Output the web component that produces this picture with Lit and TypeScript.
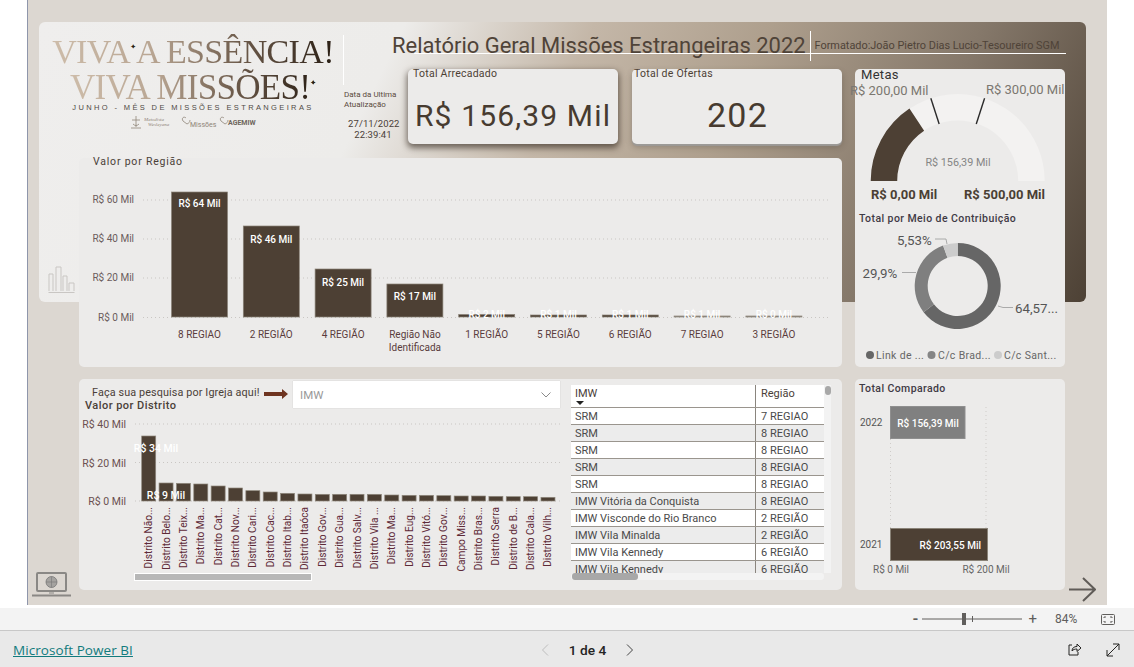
import {LitElement, html, svg, css} from 'lit';
import {customElement} from 'lit/decorators.js';

const DARK = '#4d4034';

const regions = [
  {name: ['8 REGIAO'], top: 192, value: 'R$ 64 Mil', labelY: 207},
  {name: ['2 REGIÃO'], top: 226, value: 'R$ 46 Mil', labelY: 243},
  {name: ['4 REGIÃO'], top: 269, value: 'R$ 25 Mil', labelY: 286},
  {name: ['Região Não', 'Identificada'], top: 284, value: 'R$ 17 Mil', labelY: 300},
  {name: ['1 REGIÃO'], top: 314.5, value: 'R$ 2 Mil', labelY: 318},
  {name: ['5 REGIÃO'], top: 315, value: 'R$ 1 Mil', labelY: 318},
  {name: ['6 REGIÃO'], top: 315, value: 'R$ 1 Mil', labelY: 318},
  {name: ['7 REGIAO'], top: 316, value: 'R$ 1 Mil', labelY: 318, light: true},
  {name: ['3 REGIÃO'], top: 316, value: 'R$ 0 Mil', labelY: 318, light: true},
];

const districts: [string, number][] = [
  ['Distrito Não...', 183], ['Distrito Belo...', 324], ['Distrito Teix...', 325], ['Distrito Ma...', 327],
  ['Distrito Cat...', 333], ['Distrito Nov...', 339], ['Distrito Cari...', 347], ['Distrito Cac...', 351],
  ['Distrito Itab...', 355], ['Distrito Itaóca', 357], ['Distrito Gov...', 358], ['Distrito Gua...', 358],
  ['Distrito Salv...', 358], ['Distrito Vila ...', 358], ['Distrito Ma...', 360], ['Distrito Eug...', 361],
  ['Distrito Vitó...', 361], ['Distrito Gov...', 362], ['Campo Miss...', 363], ['Distrito Bras...', 363],
  ['Distrito Serra', 364], ['Distrito de B...', 365], ['Distrito Cala...', 365], ['Distrito Vilh...', 367],
];

const churches = [
  ['SRM', '7 REGIAO'], ['SRM', '8 REGIAO'], ['SRM', '8 REGIAO'], ['SRM', '8 REGIAO'], ['SRM', '8 REGIAO'],
  ['IMW Vitória da Conquista', '8 REGIAO'], ['IMW Visconde do Rio Branco', '2 REGIÃO'],
  ['IMW Vila Minalda', '2 REGIÃO'], ['IMW Vila Kennedy', '6 REGIÃO'], ['IMW Vila Kennedy', '6 REGIÃO'],
];

// point on a half circle, fraction 0 is the left end and 1 the right end
function polar(cx: number, cy: number, r: number, f: number) {
  const a = Math.PI * (1 - f);
  return [cx + r * Math.cos(a), cy - r * Math.sin(a)];
}

function band(cx: number, cy: number, r0: number, r1: number, from: number, to: number) {
  const [ax, ay] = polar(cx, cy, r1, from);
  const [bx, by] = polar(cx, cy, r1, to);
  const [dx, dy] = polar(cx, cy, r0, to);
  const [ex, ey] = polar(cx, cy, r0, from);
  return `M${ax} ${ay}A${r1} ${r1} 0 0 1 ${bx} ${by}L${dx} ${dy}A${r0} ${r0} 0 0 0 ${ex} ${ey}Z`;
}

// donut slice, fractions run clockwise from the top
function slice(cx: number, cy: number, r0: number, r1: number, from: number, to: number) {
  const pt = (r: number, f: number) => {
    const a = 2 * Math.PI * f;
    return [cx + r * Math.sin(a), cy - r * Math.cos(a)];
  };
  const large = to - from > 0.5 ? 1 : 0;
  const [ax, ay] = pt(r1, from);
  const [bx, by] = pt(r1, to);
  const [dx, dy] = pt(r0, to);
  const [ex, ey] = pt(r0, from);
  return `M${ax} ${ay}A${r1} ${r1} 0 ${large} 1 ${bx} ${by}L${dx} ${dy}A${r0} ${r0} 0 ${large} 0 ${ex} ${ey}Z`;
}

@customElement('app-root')
export class AppRoot extends LitElement {
  static styles = css`
    :host {
      display: block;
      width: 1134px;
      height: 667px;
      overflow: hidden;
      background: #fff;
      font-family: Roboto, 'Liberation Sans', sans-serif;
      color: #4d4034;
    }
    .stage {
      display: flex;
      height: 605px;
    }
    .side {
      width: 27px;
      border-right: 1px solid #8f96ab;
      box-sizing: content-box;
    }
    .canvas {
      width: 1079px;
      height: 605px;
      background: #dcd7d1;
      display: grid;
      grid-template-columns: 11px 40px 313px 16px 210px 14px 210px 13px 210px 21px 21px;
      grid-template-rows: 22px 47px 75px 14px 144px 65px 12px 211px 15px;
    }
    .banner {
      grid-column: 2 / 11;
      grid-row: 2 / 6;
      border-radius: 6px;
      background: linear-gradient(116deg, #efeeed 0%, #edecea 31%, #c4b7a8 47%, #ae9f8d 62%, #85786a 80%, #4d4135 100%);
    }
    .brand {
      grid-column: 2 / 5;
      grid-row: 2 / 5;
      display: flex;
      padding: 9px 0 0 8px;
    }
    .logo {
      width: 296px;
      display: flex;
      flex-direction: column;
      align-items: center;
    }
    .headline {
      font-family: 'Liberation Serif', serif;
      font-size: 34px;
      line-height: 33px;
      white-space: nowrap;
      letter-spacing: -0.65px;
      margin-right: 4px;
      background: linear-gradient(90deg, #cdbca9 0%, #b9a693 35%, #6a5848 68%, #2a1f15 100%);
      -webkit-background-clip: text;
      background-clip: text;
      color: transparent;
    }
    .headline.second {
      font-size: 35px;
      line-height: 31px;
      letter-spacing: -0.7px;
      margin: 0 4px 0 0;
    }
    .star {
      font-family: 'DejaVu Sans', sans-serif;
      font-size: 7px;
      vertical-align: 14px;
      letter-spacing: 0;
      color: #2a1f15;
    }
    .sub {
      font-family: 'Liberation Sans', sans-serif;
      font-size: 7.5px;
      letter-spacing: 2.37px;
      white-space: nowrap;
      margin: 0 4px 0 0;
      color: #4f4a45;
    }
    .partners {
      margin: 3px 4px 0 0;
    }
    .divider {
      width: 1px;
      height: 50px;
      margin-top: 4px;
      background: #fff;
    }
    .updated {
      width: 60px;
      padding-top: 59px;
      font-size: 8px;
      line-height: 9.5px;
      color: #5a4a3c;
      white-space: nowrap;
    }
    .stamp {
      margin-top: 9px;
      text-align: center;
      width: 50px;
      margin-left: 4px;
      font-size: 9.5px;
      line-height: 11px;
      letter-spacing: 0.1px;
      color: #4a4038;
    }
    .title {
      grid-column: 4 / 11;
      grid-row: 2 / 3;
      display: grid;
    }
    .title > * {
      grid-area: 1 / 1;
    }
    .heading {
      display: flex;
      align-items: flex-start;
      padding-top: 15px;
      white-space: nowrap;
    }
    .heading h1 {
      margin: -6px 0 0;
      font-size: 21.96px;
      font-weight: 400;
      line-height: 30px;
      color: #4f4338;
    }
    .heading .bar {
      width: 1px;
      height: 30px;
      margin: -6px 4px 0 4px;
      background: #fff;
    }
    .heading small {
      font-size: 10.9px;
      line-height: 14px;
      margin-top: 2px;
      color: #4f4338;
    }
    .rule {
      height: 1px;
      background: #fff;
      margin: 31px 20px 0 22px;
    }
    .card {
      background: #ecebea;
      border-radius: 5px;
    }
    .kpi {
      display: flex;
      flex-direction: column;
      grid-row: 3 / 4;
      padding: 0 0 0 5px;
      box-sizing: border-box;
    }
    .kpi.total {
      grid-column: 5 / 6;
      box-shadow: 0 3px 6px 1px rgba(50, 40, 30, 0.65);
    }
    .kpi.offers {
      grid-column: 7 / 8;
      box-shadow: 0 2px 1px #9c9a97, 0 3px 6px rgba(60, 50, 40, 0.3);
      padding-left: 2px;
    }
    .kpi label {
      font-size: 10.5px;
      line-height: 13px;
      margin-top: -2px;
      letter-spacing: 0.25px;
    }
    .kpi strong {
      flex: 1;
      display: flex;
      align-items: center;
      justify-content: center;
      margin: 6px 5px 0 0;
      font-weight: 400;
      font-size: 30px;
      letter-spacing: 1.15px;
      color: #473b30;
      white-space: nowrap;
    }
    .kpi.offers strong {
      font-size: 34px;
      margin-left: 4px;
    }
    .metas {
      grid-column: 9 / 10;
      grid-row: 3 / 7;
    }
    .regiao {
      grid-column: 3 / 8;
      grid-row: 5 / 7;
    }
    .bars-icon {
      grid-column: 2 / 3;
      grid-row: 5 / 6;
      align-self: end;
      margin: 0 0 9px 9px;
    }
    .lower {
      grid-column: 3 / 8;
      grid-row: 8 / 9;
      display: grid;
      grid-template-columns: 492px 1fr;
    }
    .compare {
      grid-column: 9 / 10;
      grid-row: 8 / 9;
    }
    svg.chart {
      display: block;
      overflow: visible;
    }
    svg.chart text {
      font-family: Roboto, 'Liberation Sans', sans-serif;
    }
    .laptop {
      grid-column: 1 / 3;
      grid-row: 8 / 10;
      align-self: end;
      margin: 0 0 8px 3px;
    }
    .next {
      grid-column: 10 / 12;
      grid-row: 8 / 10;
      align-self: end;
      margin: 0 0 3px 4px;
    }
    .search {
      display: grid;
    }
    .search > * {
      grid-area: 1 / 1;
    }
    .filter {
      display: flex;
      align-items: flex-start;
      height: 27px;
      margin-top: 2px;
      padding-left: 13px;
    }
    .filter span {
      width: 172px;
      font-size: 10.8px;
      line-height: 24px;
      letter-spacing: 0.12px;
      color: #4a4038;
      white-space: nowrap;
    }
    .arrow {
      margin: 8px 5px 0 0;
    }
    .select {
      width: 267px;
      height: 27px;
      box-sizing: border-box;
      background: #fff;
      display: flex;
      align-items: center;
      justify-content: space-between;
      padding: 0 9px 0 7px;
      font-size: 11.5px;
      color: #999;
      box-shadow: 0 0 1px rgba(0, 0, 0, 0.2);
    }
    .tablewrap {
      display: grid;
      grid-template-columns: 253px 7px;
      grid-template-rows: 188px 7px;
      margin: 6px 0 0 0;
    }
    .table {
      height: 188px;
      overflow: hidden;
      background: #fff;
      font-size: 11px;
      color: #4a4a4a;
    }
    .row {
      display: grid;
      grid-template-columns: 184px 1px 1fr;
      height: 17px;
      line-height: 18px;
      box-sizing: border-box;
      border-bottom: 1px solid #9a958e;
      white-space: nowrap;
    }
    .row.head {
      height: 23px;
      line-height: 18px;
      color: #4a4038;
    }
    .row.odd {
      background: #ececec;
    }
    .row > div:first-child,
    .row > div:last-child {
      padding-left: 4px;
      overflow: hidden;
    }
    .row > div:last-child {
      padding-left: 5px;
    }
    .row > i {
      background: #8a857e;
    }
    .sort {
      display: block;
      width: 0;
      height: 0;
      margin: -2px 0 0 1px;
      border: 4px solid transparent;
      border-top: 4px solid #222;
      border-bottom: 0;
    }
    .vscroll {
      background: #f3f3f3;
    }
    .vscroll b {
      display: block;
      width: 6px;
      height: 9px;
      margin: 1px 0 0 1px;
      border-radius: 3px;
      background: #a8a8a8;
    }
    .hscroll {
      background: #f3f3f3;
      border-radius: 3px;
    }
    .hscroll b {
      display: block;
      width: 66px;
      height: 7px;
      margin-left: 1px;
      border-radius: 3px;
      background: #a8a8a8;
    }
    .zoombar {
      margin-top: 3px;
      height: 22px;
      background: #f3f3f3;
      border-bottom: 1px solid #c8c8c8;
      display: flex;
      align-items: center;
      justify-content: flex-end;
      font-size: 12px;
      color: #605e5c;
    }
    .minus {
      font-size: 15px;
      font-weight: 700;
      margin-right: 4px;
    }
    .plus {
      font-size: 15px;
      margin: 0 18px 0 5px;
    }
    .zoombar svg {
      display: block;
    }
    .pct {
      width: 24px;
      margin-right: 22px;
    }
    .fit {
      margin-right: 19px;
    }
    .footer {
      height: 34px;
      background: #e9e9e9;
      display: grid;
      grid-template-columns: 1fr auto 1fr;
      align-items: center;
      padding: 2px 14px 0 13px;
    }
    .footer a {
      font-family: 'Open Sans', sans-serif;
      font-size: 13.5px;
      line-height: 20px;
      color: #117b7d;
      text-decoration: underline;
      letter-spacing: 0.06px;
    }
    .pager {
      display: flex;
      align-items: center;
      gap: 20px;
      font-size: 13.7px;
      font-weight: 500;
      color: #252423;
      margin-left: 42px;
    }
    .actions {
      display: flex;
      justify-content: flex-end;
      gap: 24px;
    }
  `;

  private regionChart() {
    const grid = [[200, 'R$ 60 Mil'], [239, 'R$ 40 Mil'], [278, 'R$ 20 Mil'], [317.5, 'R$ 0 Mil']] as const;
    return html`<svg class="chart" width="763" height="209" viewBox="79 158 763 209">
      <text x="93" y="165" font-size="10.5" letter-spacing=".8" fill="#4a4038">Valor por Região</text>
      ${grid.map(([y, t]) => svg`
        <line x1="143" x2="830" y1=${y} y2=${y} stroke="#c9c6c3" stroke-dasharray="1 3"></line>
        <text x="134" y=${y + 3} text-anchor="end" font-size="10" fill="#6b5c5c">${t}</text>`)}
      ${regions.map((r, i) => {
        const x = 171.5 + i * 71.8;
        const fill = r.light ? '#8f8a83' : DARK;
        return svg`
          <rect x=${x} y=${r.top} width="56" height=${317 - r.top} fill=${fill} stroke="#8a8378" stroke-width=".7"></rect>
          <text x=${x + 28} y=${r.labelY} text-anchor="middle" font-size="10" font-weight="500" fill="#fff">${r.value}</text>
          ${r.name.map((n, k) => svg`
            <text x=${x + 28} y=${337.5 + k * 13} text-anchor="middle" font-size="10" fill="#5a3c3c">${n}</text>`)}`;
      })}
    </svg>`;
  }

  private districtChart() {
    const grid = [[424, 'R$ 40 Mil'], [462.5, 'R$ 20 Mil'], [501, 'R$ 0 Mil']] as const;
    return html`<svg class="chart" width="492" height="211" viewBox="79 379 492 211">
      <text x="85" y="409" font-size="11" font-weight="500" letter-spacing=".45" fill="#4a4038">Valor por Distrito</text>
      ${grid.map(([y, t]) => svg`
        <line x1="135" x2="561" y1=${y} y2=${y} stroke="#c9c6c3" stroke-dasharray="1 3"></line>
        <text x="126" y=${y + 4} text-anchor="end" font-size="10.5" fill="#6b5050">${t}</text>`)}
      ${districts.map(([name, z], i) => {
        const x = 141.7 + i * 17.36;
        const top = 375 + z / 3;
        const cx = x + 7;
        return svg`
          <rect x=${x} y=${top} width="14" height=${501 - top} fill=${DARK} stroke="#8f887d" stroke-width=".7"></rect>
          <text transform="rotate(-90 ${cx + 3.5} 507)" x=${cx + 3.5} y="507" text-anchor="end" font-size="10.1" fill="#5e2a38">${name}</text>`;
      })}
      <text x="156" y="452" text-anchor="middle" font-size="10.5" font-weight="500" fill="#fff">R$ 34 Mil</text>
      <text x="166" y="499" text-anchor="middle" font-size="10.5" font-weight="500" fill="#fff">R$ 9 Mil</text>
      <rect x="134.5" y="573.5" width="177" height="7" fill="#b7b7b7" stroke="#fff"></rect>
    </svg>`;
  }

  private metas() {
    const cx = 957.7, cy = 181;
    const tick = (f: number) => {
      const [x1, y1] = polar(cx, cy, 60, f);
      const [x2, y2] = polar(cx, cy, 87, f);
      return svg`<line x1=${x1} y1=${y1} x2=${x2} y2=${y2} stroke="#2b2b2b" stroke-width="1.4"></line>`;
    };
    const dc = 957.7, dy = 286;
    return html`<svg class="chart" width="210" height="298" viewBox="855 69 210 298">
      <text x="861" y="79" font-size="13" letter-spacing=".3" fill="#333">Metas</text>
      <path d=${band(cx, cy, 60.5, 87, 0, 1)} fill="#f3f2f1"></path>
      <path d=${band(cx, cy, 60.5, 87, 0, 0.3128)} fill=${DARK}></path>
      ${tick(0.4)}${tick(0.6)}
      <text x="850" y="95" font-size="13" fill="#7b7770">R$ 200,00 Mil</text>
      <text x="986" y="94" font-size="13" fill="#7b7770">R$ 300,00 Mil</text>
      <text x="958" y="166" text-anchor="middle" font-size="10.8" fill="#858585">R$ 156,39 Mil</text>
      <text x="871" y="199" font-size="13" font-weight="700" fill="#4a3f34">R$ 0,00 Mil</text>
      <text x="964" y="199" font-size="13" font-weight="700" fill="#4a3f34">R$ 500,00 Mil</text>
      <text x="859" y="222" font-size="10.5" font-weight="500" letter-spacing=".42" fill="#3f3a45">Total por Meio de Contribuição</text>
      <path d=${slice(dc, dy, 30, 43, 0, 0.6457)} fill="#666"></path>
      <path d=${slice(dc, dy, 30, 43, 0.6457, 0.9447)} fill="#7f7f7f"></path>
      <path d=${slice(dc, dy, 30, 43, 0.9447, 1)} fill="#ccc"></path>
      <text x="897" y="245" font-size="13.3" fill="#555">5,53%</text>
      <text x="862.5" y="278" font-size="13.3" fill="#555">29,9%</text>
      <text x="1015" y="313" font-size="13.3" fill="#555">64,57...</text>
      <g fill="none" stroke="#999" stroke-width=".8">
        <path d="M935 239h11l1 5"></path>
        <path d="M902 272.5h14"></path>
        <path d="M998 306l5 1.5h10"></path>
      </g>
      ${[
        [870, '#666', 'Link de ...', 876],
        [931.5, '#858585', 'C/c Brad...', 938],
        [998, '#ccc', 'C/c Sant...', 1004],
      ].map(([x, c, t, tx]) => svg`
        <circle cx=${x} cy="355" r="4" fill=${c}></circle>
        <text x=${tx} y="359" font-size="10.5" letter-spacing=".35" fill="#666">${t}</text>`)}
    </svg>`;
  }

  private compareChart() {
    return html`<svg class="chart" width="210" height="211" viewBox="855 379 210 211">
      <text x="859" y="392" font-size="10.5" font-weight="500" letter-spacing=".4" fill="#3f3a45">Total Comparado</text>
      <g stroke="#cfccc9" stroke-dasharray="1 3">
        <line x1="890.5" x2="890.5" y1="407" y2="528"></line>
        <line x1="986" x2="986" y1="407" y2="528"></line>
      </g>
      <rect x="890.5" y="406.5" width="74.5" height="32" fill="#808080" stroke="#8f8f8f"></rect>
      <rect x="890.5" y="528.5" width="97" height="32" fill=${DARK} stroke="#8a8378"></rect>
      <text x="860" y="426" font-size="10" fill="#555">2022</text>
      <text x="860" y="548" font-size="10" fill="#555">2021</text>
      <text x="928" y="427" text-anchor="middle" font-size="10" font-weight="500" fill="#fff">R$ 156,39 Mil</text>
      <text x="981" y="549" text-anchor="end" font-size="10" font-weight="500" fill="#fff">R$ 203,55 Mil</text>
      <text x="891" y="573" text-anchor="middle" font-size="10" fill="#666">R$ 0 Mil</text>
      <text x="986" y="573" text-anchor="middle" font-size="10" fill="#666">R$ 200 Mil</text>
    </svg>`;
  }

  private partners() {
    return html`<svg class="partners" width="130" height="14" viewBox="0 0 130 14">
      <g fill="none" stroke="#8f8578" stroke-width=".8">
        <path d="M8 1v11M4 5h8M3 13h10M5 9c2 2 4 2 6 0"></path>
        <path d="M58 3c-2-2-5 0-3 3l4 3c2-1 3-2 3-4"></path>
        <path d="M96 3c-2-2-5 0-3 3l4 3c2-1 3-2 3-4"></path>
      </g>
      <g font-family="Liberation Serif, serif" font-size="5" fill="#8f8578">
        <text x="16" y="6" font-style="italic">Metodista</text>
        <text x="20" y="11" font-style="italic">Wesleyana</text>
      </g>
      <text x="62" y="12" font-family="Roboto, sans-serif" font-size="7" fill="#8f8578">Missões</text>
      <text x="100" y="10" font-family="Roboto, sans-serif" font-size="7" font-weight="700" fill="#6f665c">AGEMIW</text>
    </svg>`;
  }

  render() {
    return html`
      <div class="stage">
        <div class="side"></div>
        <div class="canvas">
          <div class="banner"></div>
          <div class="brand">
            <div class="logo">
              <div class="headline">VIVA<span class="star">✦</span>A ESSÊNCIA!</div>
              <div class="headline second">VIVA MISSÕES!<span class="star">✦</span></div>
              <div class="sub">JUNHO - MÊS DE MISSÕES ESTRANGEIRAS</div>
              ${this.partners()}
            </div>
            <div class="divider"></div>
            <div class="updated">
              Data da Ultima<br />Atualização
              <div class="stamp">27/11/2022<br />22:39:41</div>
            </div>
          </div>
          <div class="title">
            <div class="heading">
              <h1>Relatório Geral Missões Estrangeiras 2022</h1>
              <div class="bar"></div>
              <small>Formatado:João Pietro Dias Lucio-Tesoureiro SGM</small>
            </div>
            <div class="rule"></div>
          </div>
          <div class="card kpi total">
            <label>Total Arrecadado</label>
            <strong>R$ 156,39 Mil</strong>
          </div>
          <div class="card kpi offers">
            <label>Total de Ofertas</label>
            <strong>202</strong>
          </div>
          <div class="card metas">${this.metas()}</div>
          <svg class="bars-icon" width="27" height="27" viewBox="0 0 27 27" fill="none" stroke="#c9c6c3" stroke-width="1">
            <path d="M1 25V8h4v17M8 25V1h5v24M15 25V10h4v15M21 25V17h5v8M0.5 26.5h26"></path>
          </svg>
          <div class="card regiao">${this.regionChart()}</div>
          <div class="card lower">
            <div class="search">
              ${this.districtChart()}
              <div class="filter">
                <span>Faça sua pesquisa por Igreja aqui!</span>
                <svg class="arrow" width="24" height="10" viewBox="0 0 24 10">
                  <path d="M0 3h18V0l6 5-6 5V7H0z" fill="#6e3420"></path>
                </svg>
                <div class="select">
                  IMW
                  <svg width="10" height="6" viewBox="0 0 10 6" fill="none" stroke="#8a8a8a">
                    <path d="M.5.5L5 5 9.5.5"></path>
                  </svg>
                </div>
              </div>
            </div>
            <div class="tablewrap">
              <div class="table">
                <div class="row head">
                  <div>IMW<span class="sort"></span></div><i></i><div>Região</div>
                </div>
                ${churches.map(([name, region], i) => html`
                  <div class="row ${i % 2 ? 'odd' : ''}">
                    <div>${name}</div><i></i><div>${region}</div>
                  </div>`)}
              </div>
              <div class="vscroll"><b></b></div>
              <div class="hscroll"><b></b></div>
            </div>
          </div>
          <div class="card compare">${this.compareChart()}</div>
          <svg class="laptop" width="40" height="25" viewBox="0 0 40 25" fill="none" stroke="#8a8885">
            <rect x="6" y="1" width="29" height="18" rx="1" stroke-width="2"></rect>
            <circle cx="20.500" cy="10" r="5.500" fill="#a5a3a0" stroke="#777" stroke-width=".8"></circle>
            <path d="M15 10h11M20.500 4.500v11" stroke="#777" stroke-width=".6"></path>
            <path d="M1 23.500h39" stroke-width="2"></path>
            <path d="M18 21h5" stroke-width="1"></path>
          </svg>
          <svg class="next" width="27" height="25" viewBox="0 0 27 25" fill="none" stroke="#605c58" stroke-width="2">
            <path d="M0 12.500h26M14 1l12 11.500L14 24"></path>
          </svg>
        </div>
      </div>
      <div class="zoombar">
        <span class="minus">-</span>
        <svg width="101" height="12" viewBox="0 0 101 12">
          <path d="M0 6h100" stroke="#605e5c"></path>
          <path d="M50.500 3v6" stroke="#605e5c"></path>
          <rect x="40" y="0" width="4" height="12" fill="#605e5c"></rect>
        </svg>
        <span class="plus">+</span>
        <span class="pct">84%</span>
        <svg class="fit" width="14" height="11" viewBox="0 0 14 11" fill="none" stroke="#605e5c">
          <rect x=".5" y=".5" width="13" height="10" rx="1"></rect>
          <path d="M3 4V3h2M9 3h2v1M11 7v1H9M5 8H3V7"></path>
        </svg>
      </div>
      <div class="footer">
        <div><a>Microsoft Power BI</a></div>
        <div class="pager">
          <svg width="8" height="12" viewBox="0 0 8 12" fill="none" stroke="#bdbdbd"><path d="M7 .5L1.500 6 7 11.500"></path></svg>
          <span>1 de 4</span>
          <svg width="8" height="12" viewBox="0 0 8 12" fill="none" stroke="#444"><path d="M1 .5L6.500 6 1 11.500"></path></svg>
        </div>
        <div class="actions">
          <svg width="14" height="13" viewBox="0 0 14 13" fill="none" stroke="#252423">
            <path d="M4 2H1v10h9V9"></path>
            <path d="M4 8c0-3 2-4.500 5-4.500V1l4 4-4 3.500V6C7 6 5 6.500 4 8z"></path>
          </svg>
          <svg width="14" height="14" viewBox="0 0 14 14" fill="none" stroke="#252423">
            <path d="M1 13L13 1M7 1h6v6M1 7v6h6"></path>
          </svg>
        </div>
      </div>
    `;
  }
}
